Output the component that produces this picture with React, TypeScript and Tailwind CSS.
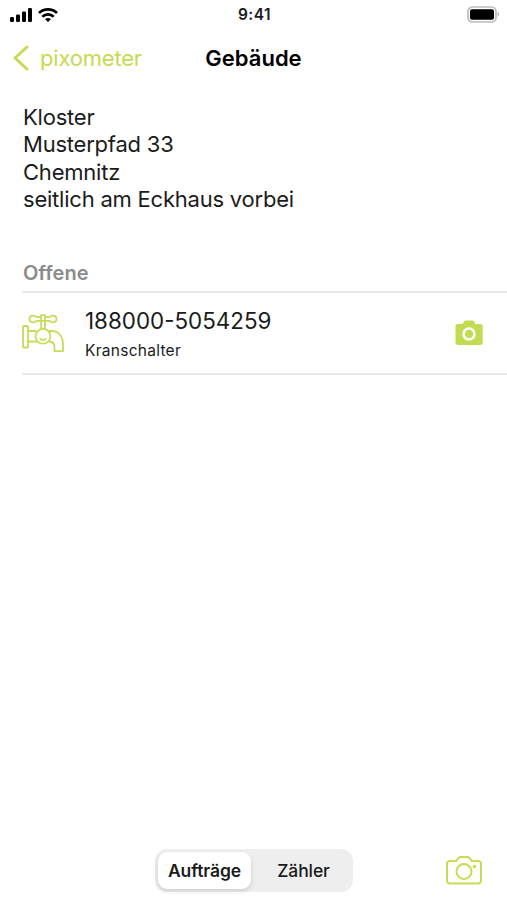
import clsx from 'clsx'

const address = ['Kloster', 'Musterpfad 33', 'Chemnitz', 'seitlich am Eckhaus vorbei']

const StatusBar = () => {
  return (
    <div className="grid grid-cols-3 items-center h-[29px] pl-[10px] pr-[8px]">
      <div className="flex items-center gap-[6px]">
        <svg width="22" height="14" viewBox="0 0 22 14" fill="#000">
          <rect x="0" y="9" width="4" height="5" rx="1.2" />
          <rect x="6" y="6.5" width="4" height="7.5" rx="1.2" />
          <rect x="12" y="3.5" width="4" height="10.5" rx="1.2" />
          <rect x="18" y="0" width="4" height="14" rx="1.2" />
        </svg>
        <svg width="20" height="14" viewBox="0 0 20 14" fill="none" stroke="#000" strokeWidth="2.7">
          <path d="M1 5C6 .2 14 .2 19 5" />
          <path d="M4.3 8.7c3.3-3 8.1-3 11.4 0" />
          <path d="M10 14 7 11.2c1.7-1.5 4.3-1.5 6 0Z" fill="#000" stroke="none" />
        </svg>
      </div>
      <span className="text-center text-[15.5px] font-semibold tracking-[0.5px]">9:41</span>
      <svg className="justify-self-end" width="32" height="18" viewBox="0 0 32 18">
        <rect x="1" y="1" width="28" height="15" rx="4.5" fill="#fff" stroke="#bcbcbc" strokeWidth="1.7" />
        <rect x="3" y="3.2" width="24" height="10.6" rx="2" fill="#000" />
        <path d="M30.5 6v4.5c2-.7 2-3.8 0-4.5Z" fill="#bbb" />
      </svg>
    </div>
  )
}

const NavBar = () => {
  return (
    <header className="grid grid-cols-3 items-center h-[58px] pl-[13px] pr-[13px]">
      <button className="flex items-center gap-[11px] text-[#c1dd50]">
        <svg width="16" height="26" viewBox="0 0 16 26" fill="none" stroke="currentColor" strokeWidth="3" strokeLinecap="round" strokeLinejoin="round">
          <path d="M14 2 2 13l12 11" />
        </svg>
        <span className="text-[22px] tracking-[-0.2px]">pixometer</span>
      </button>
      <h1 className="text-center text-[22px] font-semibold text-black">Gebäude</h1>
    </header>
  )
}

const TapIcon = () => {
  return (
    <svg width="42" height="38" viewBox="0 0 42 38" fill="none" stroke="#c4de58" strokeWidth="1.8" strokeLinejoin="round">
      <rect x="1" y="12" width="5" height="21.5" rx=".8" />
      <path d="M6 17h8.5M6 27.5h10" />
      <path d="M19.2 7v8M23 7v8" />
      {/* handle */}
      <path d="M19 3.2h-4.5C13 1 7.5.8 7.5 5s5.500 4 7 1.800h13C29 9 34.500 9.200 34.500 5S29 1 27.500 3.200H23" />
      <path d="M19 6.500V1.200h4v5.300" />
      <circle cx="21" cy="22.3" r="7.4" />
      <path d="M17.8 24.300c1.700 2.400 4.700 2.400 6.400 0" />
      <path d="M26.500 17H29c8 0 12 5.500 12 13.500v6.600h-8.500V33c0-3.500-2-5.500-5.500-5.500" />
    </svg>
  )
}

const MeterRow = () => {
  return (
    <div className="flex items-center h-[80px] border-b-2 border-[#e9e9ea] box-content">
      <TapIcon />
      <div className="flex-1 ml-[21px] pt-[5px]">
        <div className="text-[22.4px] leading-[28px]">188000-5054259</div>
        <div className="mt-[4px] text-[15.5px] leading-6 tracking-[0.27px]">Kranschalter</div>
      </div>
      <svg className="mr-6" width="28" height="26" viewBox="0 0 28 26" fill="#c1dc50">
        <path d="M3 4h4.500l1.500-2.500Q9.500.5 11 .5h6q1.500 0 2 1L20.500 4H25q2.700 0 2.700 2.700v15.600q0 2.700-2.700 2.700H3.200Q.5 25 .5 22.300V6.700Q.5 4 3 4Z" />
        <circle cx="14" cy="14" r="5.500" stroke="#fff" strokeWidth="2.700" />
      </svg>
    </div>
  )
}

const Toolbar = () => {
  const tab = clsx('grid place-content-center h-[37px] text-[17.5px] tracking-[-0.1px]')
  return (
    <footer className="grid grid-cols-[1fr_198px_1fr] items-center h-[59px] pr-[25px] pl-[26px]">
      <div />
      <div className="flex h-[43px] p-[3px] rounded-[12px] bg-[#eeeeef]">
        <button className={clsx(tab, 'w-[93px] pt-[2px] rounded-[9px] bg-white font-semibold shadow-[0_2px_5px_rgba(0,0,0,0.14)]')}>
          Aufträge
        </button>
        <button className={clsx(tab, 'flex-1 pt-[2px] pl-[6px] font-medium')}>Zähler</button>
      </div>
      <svg className="justify-self-end" width="36" height="29" viewBox="0 0 36 29" fill="none" stroke="#c4de58" strokeWidth="2" strokeLinejoin="round">
        <path d="M4 5h6l3-3.500q.4-.5 1-.5h8q.6 0 1 .5L26 5h6q3 0 3 3v16.500q0 3-3 3H4q-3 0-3-3V8q0-3 3-3Z" />
        <circle cx="18" cy="15.500" r="7.500" />
        <circle cx="28.500" cy="10.500" r="1.700" fill="#c4de58" stroke="none" />
      </svg>
    </footer>
  )
}

export default function App() {
  return (
    <main className="flex flex-col w-full h-screen bg-white text-[#1b1b1c] font-['Inter','Liberation_Sans',sans-serif]">
      <StatusBar />
      <NavBar />
      <section className="mt-[17px] ml-[23px] text-[22px] leading-[27.4px] tracking-[-0.22px]">
        {address.map((line) => (
          <p key={line}>{line}</p>
        ))}
      </section>
      <section className="ml-[22px] mt-[44px]">
        <h2 className="h-[35px] pl-px text-[20px] leading-[30px] font-semibold text-[#8b8b8e] border-b-2 border-[#e9e9ea]">
          Offene
        </h2>
        <MeterRow />
      </section>
      <div className="flex-1" />
      <Toolbar />
    </main>
  )
}
